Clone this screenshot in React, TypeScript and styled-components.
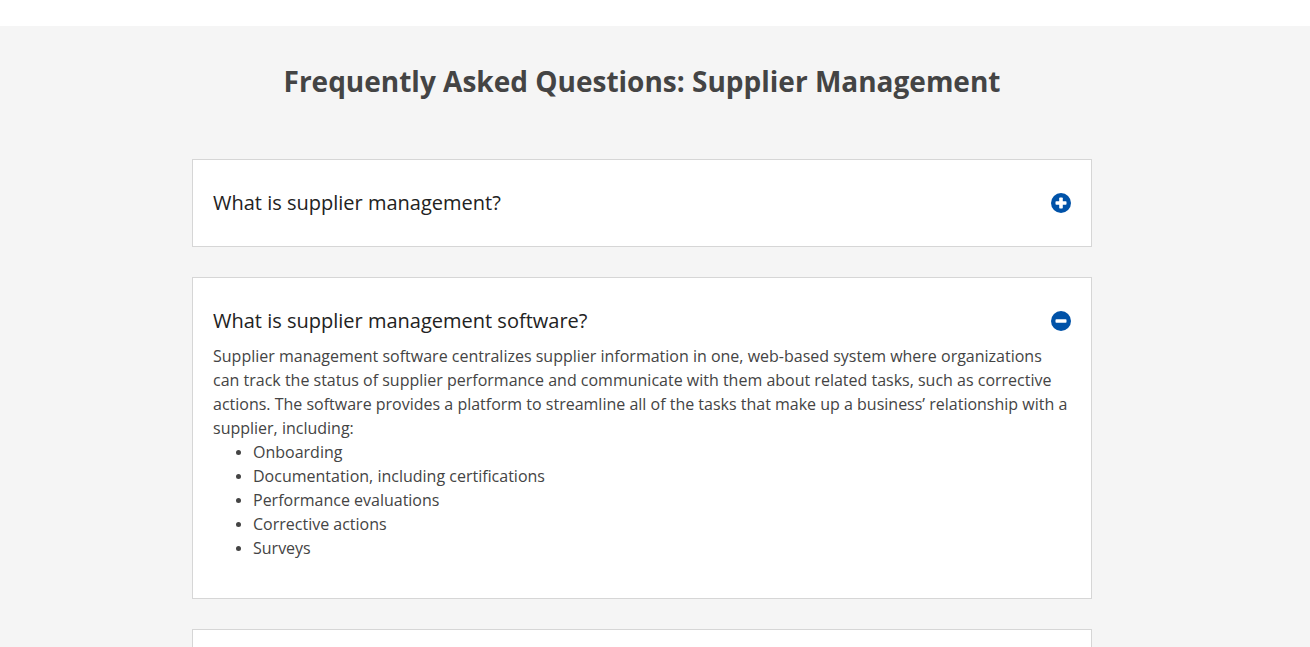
import React from "react";
import styled, { createGlobalStyle } from "styled-components";

const Global = createGlobalStyle`
  html { overflow-y: scroll; }
  body { margin: 0; font-family: "Open Sans", "Noto Sans", sans-serif; background: #fff; }
`;

const TopStrip = styled.div`
  height: 26px;
  background: #fff;
`;

const Section = styled.section`
  background: #f5f5f5;
  padding: 34px 0 40px;
  min-height: 900px;
`;

const Inner = styled.div`
  width: 900px;
  margin: 0 auto;
  transform: translateX(-13px);
`;

const Title = styled.h2`
  margin: 0 0 57px;
  text-align: center;
  font-size: 28px;
  line-height: 42px;
  font-weight: 700;
  color: #444;
`;

const List = styled.div`
  display: flex;
  flex-direction: column;
  gap: 30px;
`;

const Card = styled.div<{ $open?: boolean }>`
  background: #fff;
  border: 1px solid #d6d6d6;
  padding: ${(p) => (p.$open ? "29px 20px 38px" : "29px 20px")};
`;

const QRow = styled.div`
  display: flex;
  align-items: center;
  justify-content: space-between;
`;

const Question = styled.h3`
  margin: 0;
  font-size: 20px;
  line-height: 28px;
  font-weight: 400;
  color: #222;
`;

const Answer = styled.div`
  margin-top: 9px;
  font-size: 16px;
  line-height: 24px;
  color: #444;
`;

const P = styled.p`
  margin: 0;
`;

const Ul = styled.ul`
  margin: 0;
  padding-left: 40px;
  & li::marker { font-size: 14px; }
`;

const Icon = ({ open }: { open: boolean }) => (
  <svg width="20" height="20" viewBox="0 0 20 20">
    <circle cx="10" cy="10" r="10" fill="#0052a8" />
    <rect x="4.5" y="8.2" width="11" height="3.6" rx="0.8" fill="#fff" />
    {!open && <rect x="8.2" y="4.5" width="3.6" height="11" rx="0.8" fill="#fff" />}
  </svg>
);

export default function App() {
  return (
    <>
      <Global />
      <TopStrip />
      <Section>
        <Inner>
          <Title>Frequently Asked Questions: Supplier Management</Title>
          <List>
            <Card>
              <QRow>
                <Question>What is supplier management?</Question>
                <Icon open={false} />
              </QRow>
            </Card>
            <Card $open>
              <QRow>
                <Question>What is supplier management software?</Question>
                <Icon open />
              </QRow>
              <Answer>
                <P>
                  Supplier management software centralizes supplier information in one, web-based system where organizations can track the status of supplier performance and communicate with them about related tasks, such as corrective actions. The software provides a platform to streamline all of the tasks that make up a business’ relationship with a supplier, including:
                </P>
                <Ul>
                  <li>Onboarding</li>
                  <li>Documentation, including certifications</li>
                  <li>Performance evaluations</li>
                  <li>Corrective actions</li>
                  <li>Surveys</li>
                </Ul>
              </Answer>
            </Card>
            <Card>
              <QRow>
                <Question>How does supplier management software help?</Question>
                <Icon open={false} />
              </QRow>
            </Card>
          </List>
        </Inner>
      </Section>
    </>
  );
}
